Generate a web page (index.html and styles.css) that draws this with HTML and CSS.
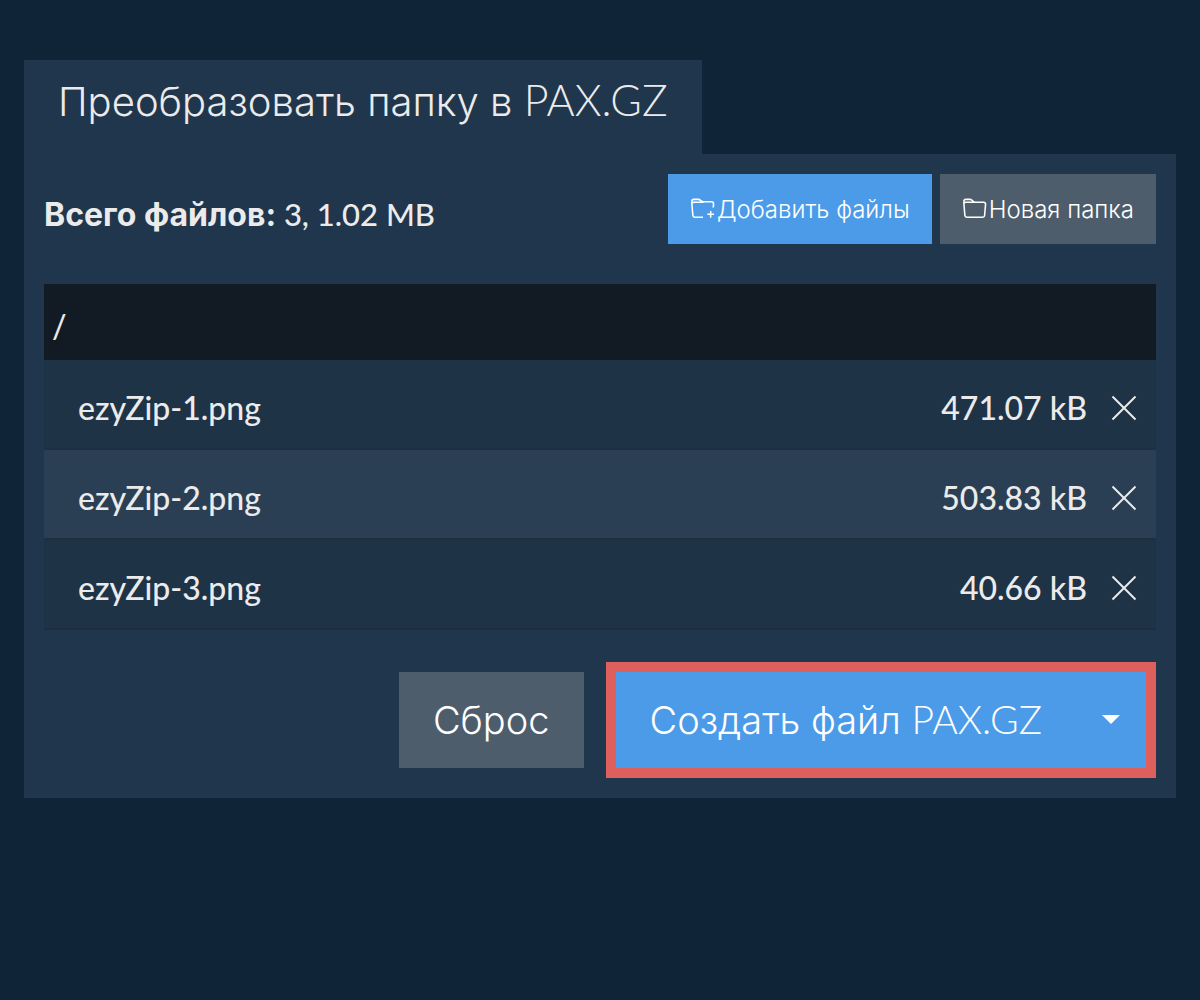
FILE: index.html
```html
<!DOCTYPE html>
<html lang="ru">
<head>
<meta charset="utf-8">
<title>Преобразовать папку в PAX.GZ</title>
<link rel="stylesheet" href="styles.css">
</head>
<body>
<main class="converter">
  <h1 class="tab">Преобразовать папку в <span class="latin">PAX.GZ</span></h1>
  <section class="panel">
    <header class="toolbar">
      <p class="summary"><strong>Всего файлов:</strong> 3, 1.02 MB</p>
      <div class="tools">
        <button class="tool primary" type="button">
          <svg class="folder" viewBox="0 0 26 24" aria-hidden="true"><path d="M13.500 20.500H5a2 2 0 0 1-2-1.800L2 7.500V4a2 2 0 0 1 2-2h4.500c2.500 0 3 2.500 5.500 2.500h8.500a2 2 0 0 1 2 2l-.300 4M2 7a2 2 0 0 1 2-2h10M21.500 14v7M18 17.500h7"/></svg>
          <span>Добавить файлы</span>
        </button>
        <button class="tool muted" type="button">
          <svg class="folder" viewBox="0 0 26 24" aria-hidden="true"><path d="M2 7a2 2 0 0 1 2-2h18.500a2 2 0 0 1 2 2l-1 11.700a2 2 0 0 1-2 1.800H5a2 2 0 0 1-2-1.800L2 7V4a2 2 0 0 1 2-2h4.500C11 2 11 5 14 5"/></svg>
          <span>Новая папка</span>
        </button>
      </div>
    </header>
    <table class="files">
      <thead><tr><th colspan="3">/</th></tr></thead>
      <tbody>
        <tr><td class="name">ezyZip-1.png</td><td class="size">471.07 kB</td><td class="action"><button class="remove" type="button" aria-label="Удалить ezyZip-1.png"><svg viewBox="0 0 26 26" aria-hidden="true"><path d="M1.500 1.500l23 23M24.500 1.500l-23 23"/></svg></button></td></tr>
        <tr><td class="name">ezyZip-2.png</td><td class="size">503.83 kB</td><td class="action"><button class="remove" type="button" aria-label="Удалить ezyZip-2.png"><svg viewBox="0 0 26 26" aria-hidden="true"><path d="M1.500 1.500l23 23M24.500 1.500l-23 23"/></svg></button></td></tr>
        <tr><td class="name">ezyZip-3.png</td><td class="size">40.66 kB</td><td class="action"><button class="remove" type="button" aria-label="Удалить ezyZip-3.png"><svg viewBox="0 0 26 26" aria-hidden="true"><path d="M1.500 1.500l23 23M24.500 1.500l-23 23"/></svg></button></td></tr>
      </tbody>
    </table>
    <footer class="actions">
      <button class="large muted" type="button">Сброс</button>
      <div class="create">
        <button class="large primary" type="button">Создать файл <span class="latin">PAX.GZ</span></button>
        <button class="toggle primary" type="button" aria-label="Другие варианты"><svg viewBox="0 0 18 10" aria-hidden="true"><path d="M0 0h18L9 9z"/></svg></button>
      </div>
    </footer>
  </section>
</main>
</body>
</html>
```
FILE: styles.css
```css
* { box-sizing: border-box; }
body {
  margin: 0;
  padding: 60px 24px;
  background: #0f2437;
  color: #ebebeb;
  font: 500 32px/48px Lato, "Noto Sans", sans-serif;
}
button {
  margin: 0;
  border: 0;
  padding: 0;
  color: #fff;
  font-family: Inter, "Noto Sans", sans-serif;
  font-weight: 300;
  cursor: pointer;
}
svg { display: block; }
.tab {
  width: fit-content;
  margin: 0;
  padding: 12px 34px 22px;
  background: #20364c;
  font: 300 40px/60px Inter, "Noto Sans", sans-serif;
}
.latin { font-family: Lato, sans-serif; font-size: 43px; line-height: 1; }
.panel { padding: 20px; background: #20364c; }
.toolbar {
  display: flex;
  justify-content: space-between;
  align-items: center;
  margin-bottom: 40px;
}
.summary { margin: 0; padding-top: 10px; font-size: 31px; }
.summary strong {
  font: 700 32px/1 Inter, "Noto Sans", sans-serif;
}
.tools { display: flex; gap: 8px; }
.tool {
  display: flex;
  align-items: center;
  height: 70px;
  padding: 0 22px;
  gap: 2px;
  font-size: 24px;
}
.primary { background: #4c9be8; }
.muted { background: #4e5d6c; }
.folder {
  width: 25px;
  height: 24px;
  fill: none;
  stroke: currentColor;
  stroke-width: 1.6;
}
.files { width: 100%; border-collapse: separate; border-spacing: 0; }
.files th {
  height: 76px;
  padding: 8px 8px 0;
  background: #121a23;
  text-align: left;
  font-weight: 500;
}
.files td {
  height: 90px;
  padding: 8px 0 0;
  border-bottom: 2px solid #1d2f40;
}
.files tbody tr { background: #1f3347; }
.files tbody tr:nth-child(even) { background: #2b3f54; }
.files .name { padding-left: 34px; }
.files .size { text-align: right; }
.files .action { width: 69px; padding: 8px 19px 0 24px; }
.remove { display: block; background: none; }
.remove svg {
  width: 26px;
  height: 26px;
  fill: none;
  stroke: #ebebeb;
  stroke-width: 2;
}
.actions {
  display: flex;
  justify-content: flex-end;
  align-items: center;
  gap: 22px;
  margin-top: 32px;
}
.large { height: 96px; padding: 0 34px; font-size: 38px; }
.large .latin { font-size: 39px; }
.create { display: flex; border: 10px solid #df5f5d; }
.toggle { padding: 0 26px; }
.toggle svg { width: 18px; height: 10px; fill: currentColor; }
```
